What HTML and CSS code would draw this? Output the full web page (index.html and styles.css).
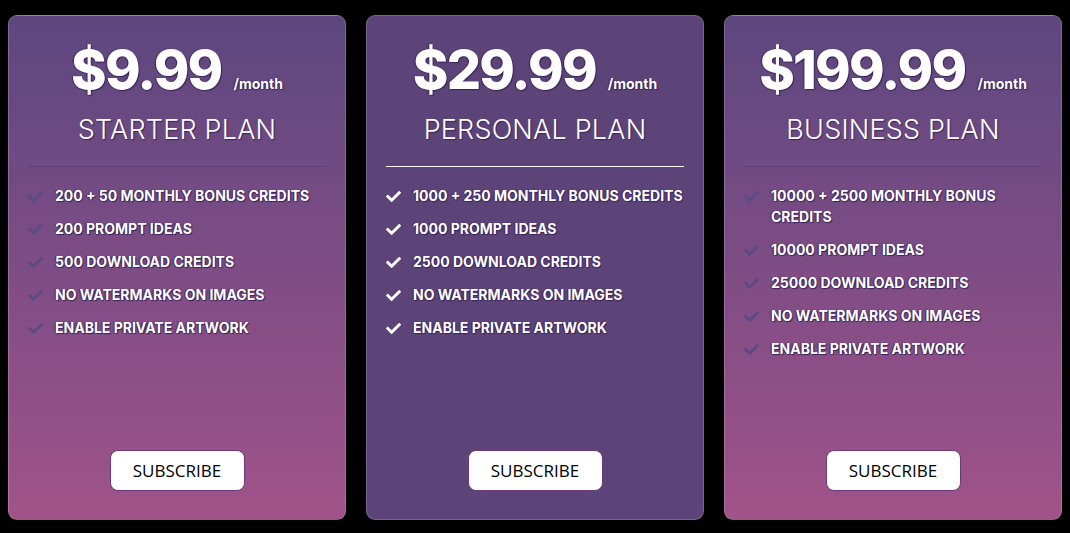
FILE: index.html
```html
<!DOCTYPE html>
<html lang="en">
<head>
    <meta charset="UTF-8">
    <meta name="viewport" content="width=device-width, initial-scale=1.0">
    <title>Pricing Plans</title>
    <link rel="stylesheet" href="styles.css">
</head>
<body>
    <div class="plans">
        <div class="card">
            <div class="price">
                <span class="amount">$9.99</span>
                <span class="period">/month</span>
            </div>
            <h2 class="plan-name">STARTER PLAN</h2>
            <hr class="divider">
            <ul class="features">
                <li><svg class="check" viewBox="0 0 512 512"><path d="M173.9 439.4l-166.4-166.4c-10-10-10-26.2 0-36.2l36.2-36.2c10-10 26.2-10 36.2 0L192 312.7 432.1 72.6c10-10 26.2-10 36.2 0l36.2 36.2c10 10 10 26.2 0 36.2l-294.4 294.4c-10 10-26.2 10-36.2 0z"/></svg><span>200 + 50 MONTHLY BONUS CREDITS</span></li>
                <li><svg class="check" viewBox="0 0 512 512"><path d="M173.9 439.4l-166.4-166.4c-10-10-10-26.2 0-36.2l36.2-36.2c10-10 26.2-10 36.2 0L192 312.7 432.1 72.6c10-10 26.2-10 36.2 0l36.2 36.2c10 10 10 26.2 0 36.2l-294.4 294.4c-10 10-26.2 10-36.2 0z"/></svg><span>200 PROMPT IDEAS</span></li>
                <li><svg class="check" viewBox="0 0 512 512"><path d="M173.9 439.4l-166.4-166.4c-10-10-10-26.2 0-36.2l36.2-36.2c10-10 26.2-10 36.2 0L192 312.7 432.1 72.6c10-10 26.2-10 36.2 0l36.2 36.2c10 10 10 26.2 0 36.2l-294.4 294.4c-10 10-26.2 10-36.2 0z"/></svg><span>500 DOWNLOAD CREDITS</span></li>
                <li><svg class="check" viewBox="0 0 512 512"><path d="M173.9 439.4l-166.4-166.4c-10-10-10-26.2 0-36.2l36.2-36.2c10-10 26.2-10 36.2 0L192 312.7 432.1 72.6c10-10 26.2-10 36.2 0l36.2 36.2c10 10 10 26.2 0 36.2l-294.4 294.4c-10 10-26.2 10-36.2 0z"/></svg><span>NO WATERMARKS ON IMAGES</span></li>
                <li><svg class="check" viewBox="0 0 512 512"><path d="M173.9 439.4l-166.4-166.4c-10-10-10-26.2 0-36.2l36.2-36.2c10-10 26.2-10 36.2 0L192 312.7 432.1 72.6c10-10 26.2-10 36.2 0l36.2 36.2c10 10 10 26.2 0 36.2l-294.4 294.4c-10 10-26.2 10-36.2 0z"/></svg><span>ENABLE PRIVATE ARTWORK</span></li>
            </ul>
            <button class="subscribe">SUBSCRIBE</button>
        </div>

        <div class="card featured">
            <div class="price">
                <span class="amount">$29.99</span>
                <span class="period">/month</span>
            </div>
            <h2 class="plan-name">PERSONAL PLAN</h2>
            <hr class="divider">
            <ul class="features">
                <li><svg class="check" viewBox="0 0 512 512"><path d="M173.9 439.4l-166.4-166.4c-10-10-10-26.2 0-36.2l36.2-36.2c10-10 26.2-10 36.2 0L192 312.7 432.1 72.6c10-10 26.2-10 36.2 0l36.2 36.2c10 10 10 26.2 0 36.2l-294.4 294.4c-10 10-26.2 10-36.2 0z"/></svg><span>1000 + 250 MONTHLY BONUS CREDITS</span></li>
                <li><svg class="check" viewBox="0 0 512 512"><path d="M173.9 439.4l-166.4-166.4c-10-10-10-26.2 0-36.2l36.2-36.2c10-10 26.2-10 36.2 0L192 312.7 432.1 72.6c10-10 26.2-10 36.2 0l36.2 36.2c10 10 10 26.2 0 36.2l-294.4 294.4c-10 10-26.2 10-36.2 0z"/></svg><span>1000 PROMPT IDEAS</span></li>
                <li><svg class="check" viewBox="0 0 512 512"><path d="M173.9 439.4l-166.4-166.4c-10-10-10-26.2 0-36.2l36.2-36.2c10-10 26.2-10 36.2 0L192 312.7 432.1 72.6c10-10 26.2-10 36.2 0l36.2 36.2c10 10 10 26.2 0 36.2l-294.4 294.4c-10 10-26.2 10-36.2 0z"/></svg><span>2500 DOWNLOAD CREDITS</span></li>
                <li><svg class="check" viewBox="0 0 512 512"><path d="M173.9 439.4l-166.4-166.4c-10-10-10-26.2 0-36.2l36.2-36.2c10-10 26.2-10 36.2 0L192 312.7 432.1 72.6c10-10 26.2-10 36.2 0l36.2 36.2c10 10 10 26.2 0 36.2l-294.4 294.4c-10 10-26.2 10-36.2 0z"/></svg><span>NO WATERMARKS ON IMAGES</span></li>
                <li><svg class="check" viewBox="0 0 512 512"><path d="M173.9 439.4l-166.4-166.4c-10-10-10-26.2 0-36.2l36.2-36.2c10-10 26.2-10 36.2 0L192 312.7 432.1 72.6c10-10 26.2-10 36.2 0l36.2 36.2c10 10 10 26.2 0 36.2l-294.4 294.4c-10 10-26.2 10-36.2 0z"/></svg><span>ENABLE PRIVATE ARTWORK</span></li>
            </ul>
            <button class="subscribe">SUBSCRIBE</button>
        </div>

        <div class="card">
            <div class="price">
                <span class="amount">$199.99</span>
                <span class="period">/month</span>
            </div>
            <h2 class="plan-name">BUSINESS PLAN</h2>
            <hr class="divider">
            <ul class="features">
                <li><svg class="check" viewBox="0 0 512 512"><path d="M173.9 439.4l-166.4-166.4c-10-10-10-26.2 0-36.2l36.2-36.2c10-10 26.2-10 36.2 0L192 312.7 432.1 72.6c10-10 26.2-10 36.2 0l36.2 36.2c10 10 10 26.2 0 36.2l-294.4 294.4c-10 10-26.2 10-36.2 0z"/></svg><span>10000 + 2500 MONTHLY BONUS CREDITS</span></li>
                <li><svg class="check" viewBox="0 0 512 512"><path d="M173.9 439.4l-166.4-166.4c-10-10-10-26.2 0-36.2l36.2-36.2c10-10 26.2-10 36.2 0L192 312.7 432.1 72.6c10-10 26.2-10 36.2 0l36.2 36.2c10 10 10 26.2 0 36.2l-294.4 294.4c-10 10-26.2 10-36.2 0z"/></svg><span>10000 PROMPT IDEAS</span></li>
                <li><svg class="check" viewBox="0 0 512 512"><path d="M173.9 439.4l-166.4-166.4c-10-10-10-26.2 0-36.2l36.2-36.2c10-10 26.2-10 36.2 0L192 312.7 432.1 72.6c10-10 26.2-10 36.2 0l36.2 36.2c10 10 10 26.2 0 36.2l-294.4 294.4c-10 10-26.2 10-36.2 0z"/></svg><span>25000 DOWNLOAD CREDITS</span></li>
                <li><svg class="check" viewBox="0 0 512 512"><path d="M173.9 439.4l-166.4-166.4c-10-10-10-26.2 0-36.2l36.2-36.2c10-10 26.2-10 36.2 0L192 312.7 432.1 72.6c10-10 26.2-10 36.2 0l36.2 36.2c10 10 10 26.2 0 36.2l-294.4 294.4c-10 10-26.2 10-36.2 0z"/></svg><span>NO WATERMARKS ON IMAGES</span></li>
                <li><svg class="check" viewBox="0 0 512 512"><path d="M173.9 439.4l-166.4-166.4c-10-10-10-26.2 0-36.2l36.2-36.2c10-10 26.2-10 36.2 0L192 312.7 432.1 72.6c10-10 26.2-10 36.2 0l36.2 36.2c10 10 10 26.2 0 36.2l-294.4 294.4c-10 10-26.2 10-36.2 0z"/></svg><span>ENABLE PRIVATE ARTWORK</span></li>
            </ul>
            <button class="subscribe">SUBSCRIBE</button>
        </div>
    </div>
</body>
</html>
```

FILE: styles.css
```css
* {
    box-sizing: border-box;
}
body {
    background-color: #000000;
    color: #FFFFFF;
    font-family: Inter, "Open Sans", sans-serif;
    margin: 0;
    padding: 15px 8px 13px;
    height: 100vh;
}
.plans {
    display: grid;
    grid-template-columns: repeat(3, 1fr);
    gap: 20px;
    height: 100%;
}
.card {
    display: flex;
    flex-direction: column;
    align-items: center;
    border: 1px solid rgba(255, 255, 255, 0.18);
    border-radius: 9px;
    background: linear-gradient(180deg, #5d477f 0%, #7b4c84 45%, #a05389 100%);
    padding: 24px 19px 28px;
}
.card.featured {
    background: #5c4479;
}
.price {
    display: flex;
    align-items: baseline;
    gap: 12px;
    text-shadow: 1px 1px 1px #3a2358, -1px 0 1px #3a2358;
}
.amount {
    font-size: 54px;
    font-weight: 800;
    line-height: 1.1;
    letter-spacing: -1.8px;
}
.period {
    font-size: 14px;
    font-weight: 700;
}
.plan-name {
    margin: 15px 0 0;
    font-size: 27px;
    font-weight: 300;
    line-height: 1.2;
    letter-spacing: 0.2px;
    text-shadow: 1px 1px 1px #3a2358;
}
.divider {
    width: 100%;
    margin: 19px 0 0;
    border: none;
    border-top: 1px solid rgba(70, 40, 100, 0.35);
}
.featured .divider {
    border-top-color: #FFFFFF;
}
.features {
    list-style: none;
    margin: 0;
    padding: 18px 0 0;
    width: 100%;
    flex: 1;
}
.features li {
    display: flex;
    align-items: flex-start;
    gap: 12px;
    margin-bottom: 12px;
    font-size: 14px;
    font-weight: 700;
    line-height: 21px;
    text-shadow: 1px 1px 1px #3a2358, -1px 0 1px #3a2358;
}
.features li span {
    max-width: 280px;
}
.check {
    flex: none;
    width: 15px;
    height: 15px;
    margin-top: 4px;
    fill: #5a4b85;
}
.featured .check {
    fill: #FFFFFF;
}
.subscribe {
    width: 135px;
    height: 41px;
    background-color: #FFFFFF;
    color: #000000;
    border: 1px solid #6b3a78;
    border-radius: 8px;
    font-family: "Open Sans", sans-serif;
    font-size: 17px;
    cursor: pointer;
}
```
